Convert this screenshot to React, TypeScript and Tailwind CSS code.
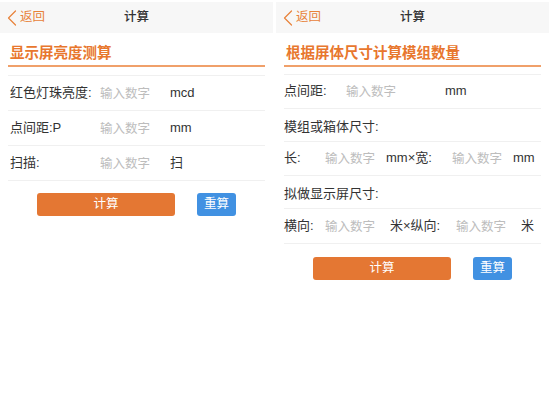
import React from "react";

const font = { fontFamily: '"Liberation Sans", "Noto Sans CJK SC", sans-serif' };

function Header() {
  return (
    <div className="relative flex h-[31px] items-center bg-[#f7f7f7]">
      <div className="flex items-center pl-[7px] text-[#e8823a]">
        <svg width="10" height="16" viewBox="0 0 10 16" fill="none">
          <path d="M8.5 1 L1.5 8 L8.5 15" stroke="#e8823a" strokeWidth="1.2" strokeLinecap="round" strokeLinejoin="round" />
        </svg>
        <span className="ml-[3px] text-[12.5px] leading-none">返回</span>
      </div>
      <div className="absolute inset-x-0 text-center text-[12.5px] font-medium text-[#333]">计算</div>
    </div>
  );
}

function Title({ text }: { text: string }) {
  return (
    <div className="mx-2 pt-[10px]">
      <div className="pb-[2px] pl-[2px] text-[14.5px] font-bold leading-[20px] text-[#e8772e]">{text}</div>
      <div className="h-[1.5px] bg-[#f0a06a]" />
    </div>
  );
}

function Num({ w }: { w: string }) {
  return (
    <input
      placeholder="输入数字"
      className={`${w} bg-transparent pt-[2px] text-[12.5px] leading-[16px] text-[#333] outline-none placeholder:text-[#bdbdbd]`}
    />
  );
}

function Buttons() {
  return (
    <div className="flex justify-center gap-[22px]">
      <button className="h-[23px] w-[138px] rounded-[3px] bg-[#e47733] text-[12.5px] text-white">计算</button>
      <button className="h-[23px] w-[39px] rounded-[3px] bg-[#4191e2] text-[12.5px] text-white">重算</button>
    </div>
  );
}

function LeftPanel() {
  const rows = [
    ["红色灯珠亮度:", "mcd"],
    ["点间距:P", "mm"],
    ["扫描:", "扫"],
  ];
  return (
    <div className="w-[273px]">
      <Header />
      <Title text="显示屏亮度测算" />
      <div className="mx-2 mt-[8px] border-t border-[#f0f0f0]">
        {rows.map(([label, unit]) => (
          <div key={label} className="flex h-[35px] items-center border-b border-[#f0f0f0] pl-[2px] text-[13px] text-[#333]">
            <span className="w-[90px]">{label}</span>
            <Num w="w-[70px]" />
            <span>{unit}</span>
          </div>
        ))}
      </div>
      <div className="mt-[12px]">
        <Buttons />
      </div>
    </div>
  );
}

function RightPanel() {
  const row = "flex h-[34px] items-center border-b border-[#f0f0f0] text-[13px] text-[#333]";
  const head = "flex h-[33px] items-end pb-[4px] border-b border-[#f0f0f0] text-[13px] text-[#333]";
  return (
    <div className="w-[273px]">
      <Header />
      <Title text="根据屏体尺寸计算模组数量" />
      <div className="mx-2 mt-[7px] border-t border-[#f0f0f0]">
        <div className={row}>
          <span className="w-[62px]">点间距:</span>
          <Num w="w-[99px]" />
          <span>mm</span>
        </div>
        <div className={head}>模组或箱体尺寸:</div>
        <div className={row}>
          <span className="w-[41px]">长:</span>
          <Num w="w-[61px]" />
          <span className="w-[66px]">mm×宽:</span>
          <Num w="w-[61px]" />
          <span>mm</span>
        </div>
        <div className={head}>拟做显示屏尺寸:</div>
        <div className={row + " h-[35px]"}>
          <span className="w-[41px]">横向:</span>
          <Num w="w-[65px]" />
          <span className="w-[66px]">米×纵向:</span>
          <Num w="w-[65px]" />
          <span>米</span>
        </div>
      </div>
      <div className="mt-[13px]">
        <Buttons />
      </div>
    </div>
  );
}

export default function App() {
  return (
    <div className="h-[408px] w-[550px] overflow-hidden bg-white pt-[2px]" style={font}>
      <div className="flex gap-[3px]">
        <LeftPanel />
        <RightPanel />
      </div>
    </div>
  );
}
